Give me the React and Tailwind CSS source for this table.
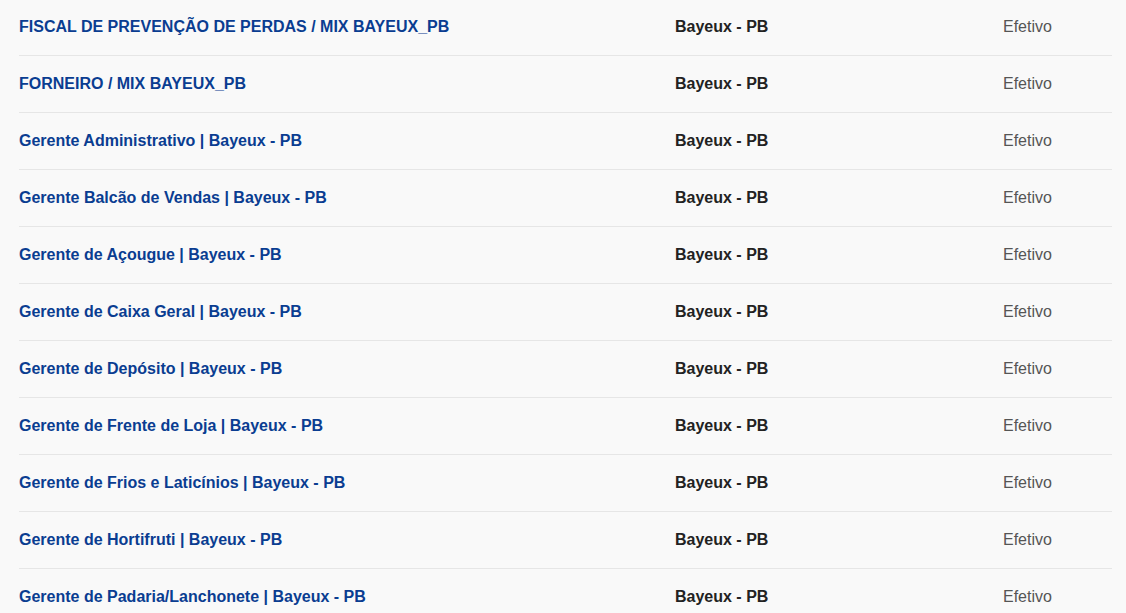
import React from 'react';

const vagas = [
    'FISCAL DE PREVENÇÃO DE PERDAS / MIX BAYEUX_PB',
    'FORNEIRO / MIX BAYEUX_PB',
    'Gerente Administrativo | Bayeux - PB',
    'Gerente Balcão de Vendas | Bayeux - PB',
    'Gerente de Açougue | Bayeux - PB',
    'Gerente de Caixa Geral | Bayeux - PB',
    'Gerente de Depósito | Bayeux - PB',
    'Gerente de Frente de Loja | Bayeux - PB',
    'Gerente de Frios e Laticínios | Bayeux - PB',
    'Gerente de Hortifruti | Bayeux - PB',
    'Gerente de Padaria/Lanchonete | Bayeux - PB',
];

const App = () => {
    return (
        <div className="h-[613px] overflow-hidden bg-[#f9f9f9] font-['Liberation_Sans',Arial,sans-serif] text-base">
            <ul className="-mt-[1px] pl-[19px] pr-[14px]">
                {vagas.map((titulo) => (
                    <li
                        key={titulo}
                        className="grid h-[57px] grid-cols-[656px_328px_1fr] items-center border-b border-[#e6e6e6]"
                    >
                        <a href="#" className="font-bold text-[#0a3d91]">{titulo}</a>
                        <span className="font-bold text-[#222]">Bayeux - PB</span>
                        <span className="text-[#555]">Efetivo</span>
                    </li>
                ))}
            </ul>
        </div>
    );
};

export default App;
